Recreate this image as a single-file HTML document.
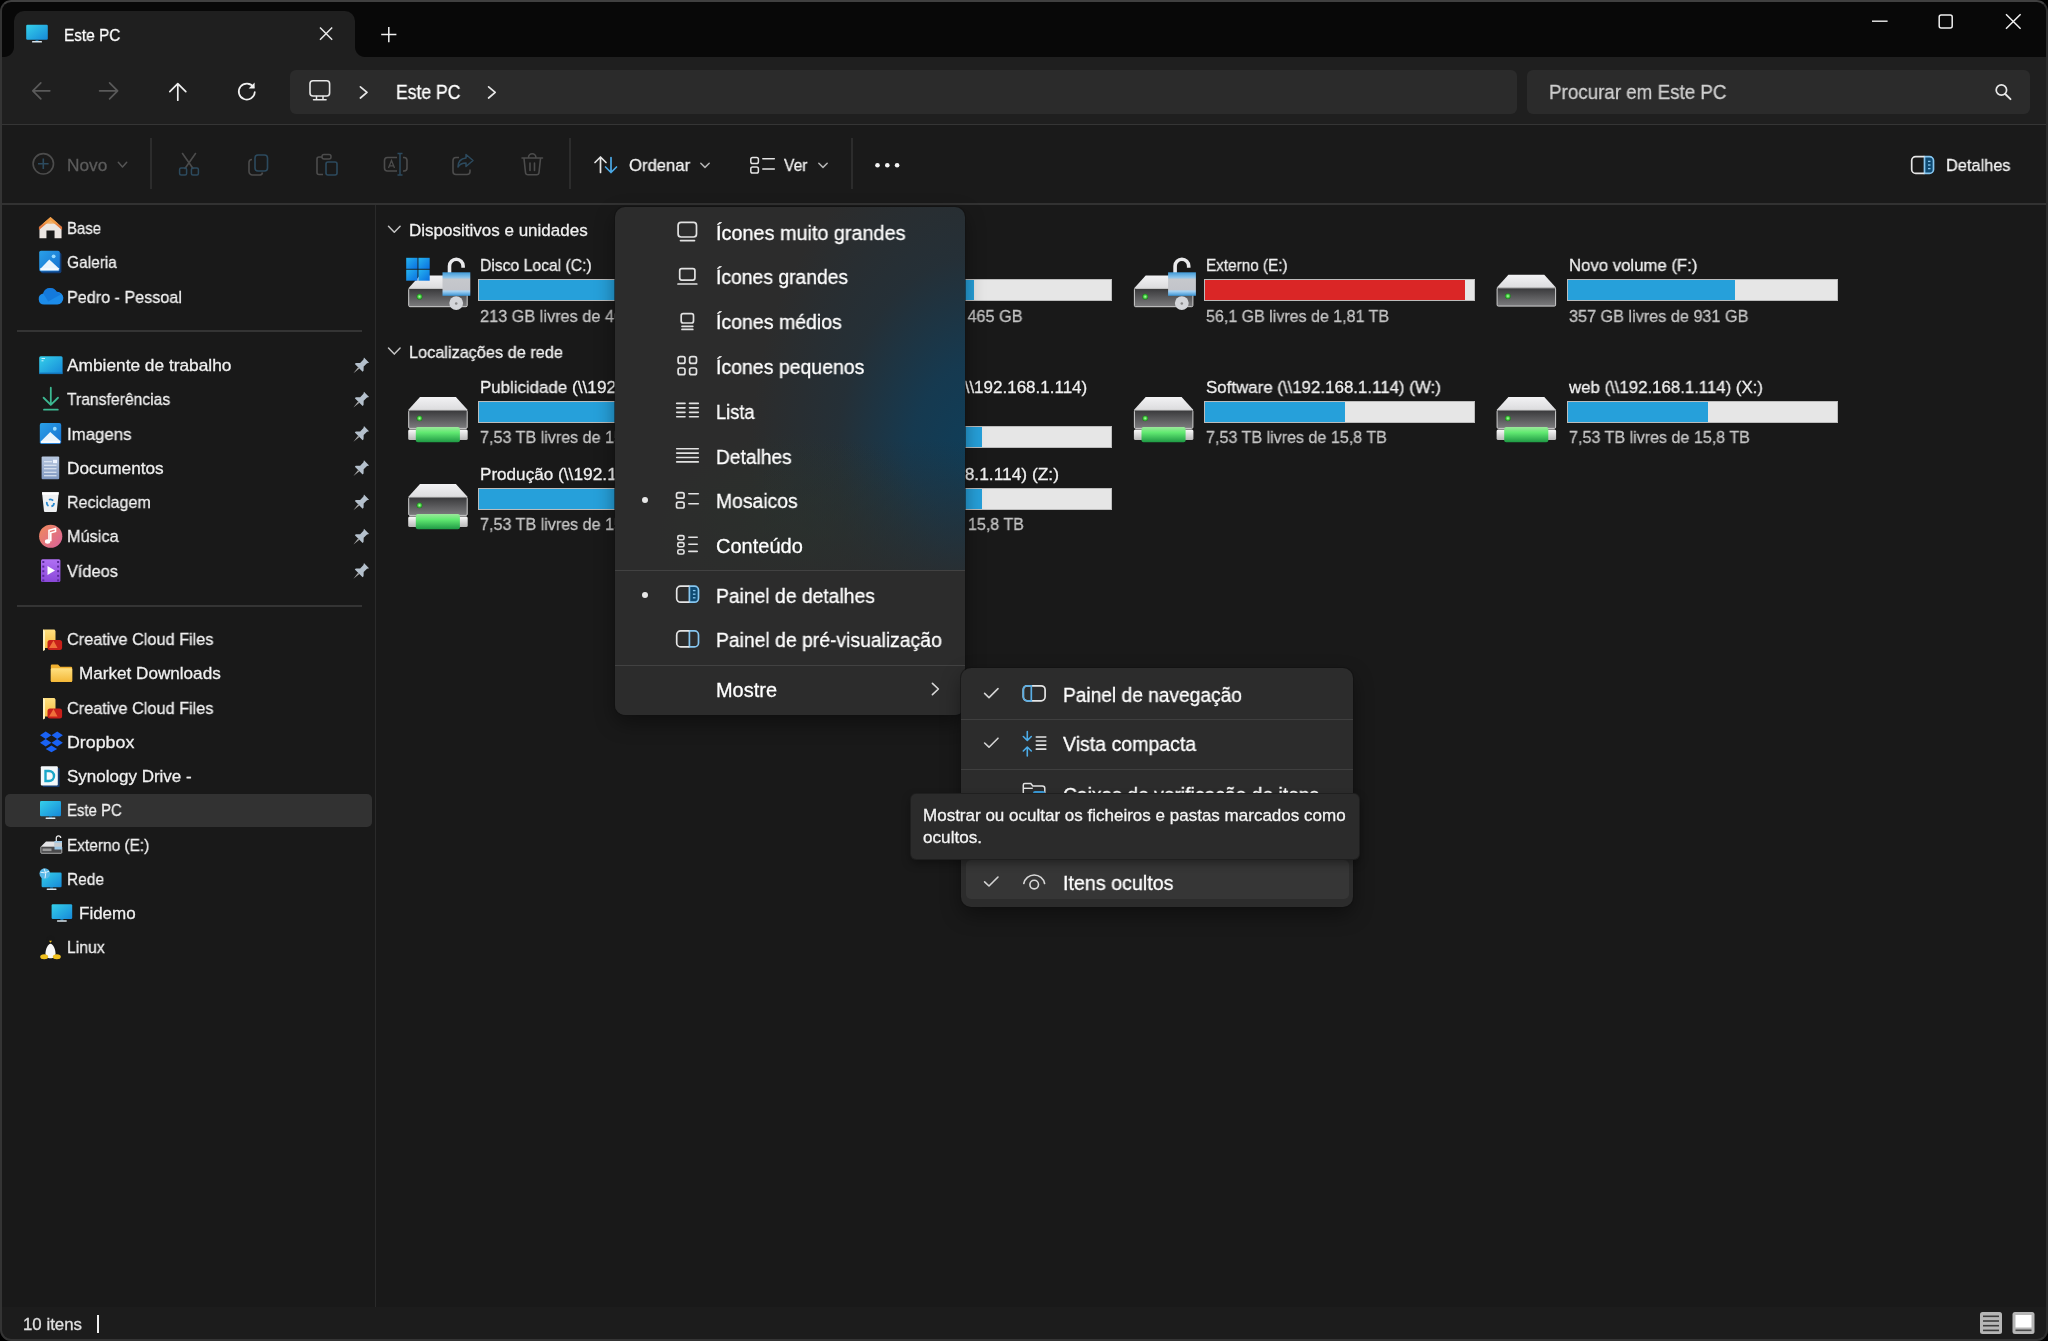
<!DOCTYPE html>
<html><head><meta charset="utf-8"><title>Este PC</title>
<style>
html,body{margin:0;padding:0;background:#000;}
body{width:2048px;height:1341px;position:relative;overflow:hidden;font-family:"Liberation Sans", sans-serif;}
#win{position:absolute;left:0;top:0;width:2048px;height:1341px;border-radius:11px;overflow:hidden;background:#191919;}
#win>div,#win>svg,#win>span{position:absolute;}
.t{white-space:nowrap;line-height:1;transform-origin:0 0;display:block;-webkit-text-stroke:.28px currentColor;will-change:transform;}
svg{overflow:visible;}
</style></head><body><div id="win">
<div style="left:0px;top:0px;width:2048px;height:57px;background:#080808;"></div>
<div style="left:0px;top:57px;width:2048px;height:68px;background:#1f1f1f;"></div>
<div style="left:14px;top:11px;width:341px;height:47px;background:#1f1f1f;border-radius:10px 10px 0 0;"></div>
<div style="left:4px;top:47px;width:10px;height:10px;background:radial-gradient(circle at 0 0,#080808 9.5px,#1f1f1f 10.5px)"></div>
<div style="left:355px;top:47px;width:10px;height:10px;background:radial-gradient(circle at 100% 0,#080808 9.5px,#1f1f1f 10.5px)"></div>
<div style="left:0px;top:123.8px;width:2048px;height:2px;background:#353535;"></div>
<div style="left:0px;top:125px;width:2048px;height:79px;background:#1a1a1a;"></div>
<div style="left:0px;top:202.9px;width:2048px;height:2px;background:#323232;"></div>
<div style="left:375px;top:205px;width:1px;height:1102px;background:#2a2a2a;"></div>
<div style="left:0px;top:1307px;width:2048px;height:34px;background:#1c1c1c;"></div>
<div style="left:290px;top:70px;width:1227px;height:44px;background:#2b2b2b;border-radius:6px;"></div>
<div style="left:1527px;top:70px;width:503px;height:44px;background:#2b2b2b;border-radius:6px;"></div>
<div style="left:5px;top:794px;width:367px;height:33px;background:#323232;border-radius:5px;"></div>
<div style="left:17px;top:330px;width:345px;height:1.5px;background:#343434;"></div>
<div style="left:17px;top:605px;width:345px;height:1.5px;background:#343434;"></div>
<div style="left:150.2px;top:138px;width:2px;height:51px;background:#2c2c2c;"></div>
<div style="left:569.4px;top:138px;width:2px;height:51px;background:#2c2c2c;"></div>
<div style="left:851.2px;top:138px;width:2px;height:51px;background:#2c2c2c;"></div>
<span class="t" id="t0" style="left:63.6px;top:27.0px;font-size:17.0px;color:#fff;transform:scaleX(0.9044);">Este PC</span>
<span class="t" id="t1" style="left:396.0px;top:83.0px;font-size:19.9px;color:#fff;transform:scaleX(0.8839);">Este PC</span>
<span class="t" id="t2" style="left:1549.0px;top:83.0px;font-size:19.9px;color:#cfcfcf;transform:scaleX(0.9445);">Procurar em Este PC</span>
<span class="t" id="t3" style="left:66.9px;top:157.0px;font-size:17.0px;color:#5c5c5c;transform:scaleX(1.0154);">Novo</span>
<span class="t" id="t4" style="left:628.5px;top:157.0px;font-size:17.0px;color:#f2f2f2;transform:scaleX(0.9796);">Ordenar</span>
<span class="t" id="t5" style="left:784.0px;top:157.0px;font-size:17.0px;color:#f2f2f2;transform:scaleX(0.9204);">Ver</span>
<span class="t" id="t6" style="left:1945.5px;top:157.0px;font-size:17.0px;color:#f2f2f2;transform:scaleX(0.9611);">Detalhes</span>
<span class="t" id="t7" style="left:66.8px;top:220.0px;font-size:17.0px;color:#f0f0f0;transform:scaleX(0.8800);">Base</span>
<span class="t" id="t8" style="left:66.8px;top:254.0px;font-size:17.0px;color:#f0f0f0;transform:scaleX(0.9104);">Galeria</span>
<span class="t" id="t9" style="left:66.8px;top:289.0px;font-size:17.0px;color:#f0f0f0;transform:scaleX(0.9500);">Pedro - Pessoal</span>
<span class="t" id="t10" style="left:66.8px;top:357.0px;font-size:17.0px;color:#f0f0f0;transform:scaleX(1.0173);">Ambiente de trabalho</span>
<span class="t" id="t11" style="left:66.8px;top:391.0px;font-size:17.0px;color:#f0f0f0;transform:scaleX(0.9239);">Transferências</span>
<span class="t" id="t12" style="left:66.8px;top:426.0px;font-size:17.0px;color:#f0f0f0;transform:scaleX(0.9892);">Imagens</span>
<span class="t" id="t13" style="left:66.8px;top:460.0px;font-size:17.0px;color:#f0f0f0;transform:scaleX(1.0132);">Documentos</span>
<span class="t" id="t14" style="left:66.8px;top:494.0px;font-size:17.0px;color:#f0f0f0;transform:scaleX(0.9424);">Reciclagem</span>
<span class="t" id="t15" style="left:66.8px;top:528.0px;font-size:17.0px;color:#f0f0f0;transform:scaleX(0.9581);">Música</span>
<span class="t" id="t16" style="left:66.8px;top:563.0px;font-size:17.0px;color:#f0f0f0;transform:scaleX(0.9615);">Vídeos</span>
<span class="t" id="t17" style="left:66.8px;top:631.0px;font-size:17.0px;color:#f0f0f0;transform:scaleX(0.9571);">Creative Cloud Files</span>
<span class="t" id="t18" style="left:78.7px;top:665.0px;font-size:17.0px;color:#f0f0f0;transform:scaleX(1.0065);">Market Downloads</span>
<span class="t" id="t19" style="left:66.8px;top:700.0px;font-size:17.0px;color:#f0f0f0;transform:scaleX(0.9571);">Creative Cloud Files</span>
<span class="t" id="t20" style="left:66.8px;top:734.0px;font-size:17.0px;color:#f0f0f0;transform:scaleX(1.0472);">Dropbox</span>
<span class="t" id="t21" style="left:66.8px;top:768.0px;font-size:17.0px;color:#f0f0f0;transform:scaleX(0.9998);">Synology Drive -</span>
<span class="t" id="t22" style="left:66.8px;top:802.0px;font-size:17.0px;color:#f0f0f0;transform:scaleX(0.8788);">Este PC</span>
<span class="t" id="t23" style="left:66.8px;top:837.0px;font-size:17.0px;color:#f0f0f0;transform:scaleX(0.9074);">Externo (E:)</span>
<span class="t" id="t24" style="left:66.8px;top:871.0px;font-size:17.0px;color:#f0f0f0;transform:scaleX(0.9104);">Rede</span>
<span class="t" id="t25" style="left:78.9px;top:905.0px;font-size:17.0px;color:#f0f0f0;transform:scaleX(0.9914);">Fidemo</span>
<span class="t" id="t26" style="left:66.8px;top:939.0px;font-size:17.0px;color:#f0f0f0;transform:scaleX(0.9252);">Linux</span>
<span class="t" id="t27" style="left:408.9px;top:222.0px;font-size:17.0px;color:#f0f0f0;transform:scaleX(1.0005);">Dispositivos e unidades</span>
<span class="t" id="t28" style="left:408.9px;top:344.0px;font-size:17.0px;color:#f0f0f0;transform:scaleX(0.9579);">Localizações de rede</span>
<div style="left:477.5px;top:279px;width:271px;height:22px;background:#e6e6e6;box-shadow:inset 0 0 0 1px #bcbcbc;"></div>
<div style="left:478.5px;top:280px;width:145px;height:20px;background:#26a0da;"></div>
<div style="left:840.5px;top:279px;width:271px;height:22px;background:#e6e6e6;box-shadow:inset 0 0 0 1px #bcbcbc;"></div>
<div style="left:841.5px;top:280px;width:132px;height:20px;background:#26a0da;"></div>
<div style="left:1203.5px;top:279px;width:271px;height:22px;background:#e6e6e6;box-shadow:inset 0 0 0 1px #bcbcbc;"></div>
<div style="left:1204.5px;top:280px;width:260px;height:20px;background:#da2626;"></div>
<div style="left:1566.5px;top:279px;width:271px;height:22px;background:#e6e6e6;box-shadow:inset 0 0 0 1px #bcbcbc;"></div>
<div style="left:1567.5px;top:280px;width:167px;height:20px;background:#26a0da;"></div>
<span class="t" id="t29" style="left:480.3px;top:257.0px;font-size:17.0px;color:#f0f0f0;transform:scaleX(0.9237);">Disco Local (C:)</span>
<span class="t" id="t30" style="left:480.3px;top:308.0px;font-size:17.0px;color:#c4c4c4;transform:scaleX(0.9583);">213 GB livres de 465 GB</span>
<span class="t" id="t31" style="left:843.3px;top:257.0px;font-size:17.0px;color:#f0f0f0;transform:scaleX(0.9332);">Dados (D:)</span>
<span class="t" id="t32" style="left:843.3px;top:308.0px;font-size:17.0px;color:#c4c4c4;transform:scaleX(0.9545);">237 GB livres de 465 GB</span>
<span class="t" id="t33" style="left:1206.3px;top:257.0px;font-size:17.0px;color:#f0f0f0;transform:scaleX(0.8996);">Externo (E:)</span>
<span class="t" id="t34" style="left:1206.3px;top:308.0px;font-size:17.0px;color:#c4c4c4;transform:scaleX(0.9421);">56,1 GB livres de 1,81 TB</span>
<span class="t" id="t35" style="left:1568.7px;top:257.0px;font-size:17.0px;color:#f0f0f0;transform:scaleX(0.9849);">Novo volume (F:)</span>
<span class="t" id="t36" style="left:1568.7px;top:308.0px;font-size:17.0px;color:#c4c4c4;transform:scaleX(0.9540);">357 GB livres de 931 GB</span>
<div style="left:477.5px;top:401px;width:271px;height:22px;background:#e6e6e6;box-shadow:inset 0 0 0 1px #bcbcbc;"></div>
<div style="left:478.5px;top:402px;width:140px;height:20px;background:#26a0da;"></div>
<div style="left:840.5px;top:425.5px;width:271px;height:22px;background:#e6e6e6;box-shadow:inset 0 0 0 1px #bcbcbc;"></div>
<div style="left:841.5px;top:426.5px;width:140px;height:20px;background:#26a0da;"></div>
<div style="left:1203.5px;top:401px;width:271px;height:22px;background:#e6e6e6;box-shadow:inset 0 0 0 1px #bcbcbc;"></div>
<div style="left:1204.5px;top:402px;width:140px;height:20px;background:#26a0da;"></div>
<div style="left:1566.5px;top:401px;width:271px;height:22px;background:#e6e6e6;box-shadow:inset 0 0 0 1px #bcbcbc;"></div>
<div style="left:1567.5px;top:402px;width:140px;height:20px;background:#26a0da;"></div>
<span class="t" id="t37" style="left:480.3px;top:379.0px;font-size:17.0px;color:#f0f0f0;transform:scaleX(0.9920);">Publicidade</span>
<span class="t" id="t38" style="left:571.7px;top:379.0px;font-size:17.0px;color:#f0f0f0;transform:scaleX(1.0166);">(\\192.168.1.114) (P:)</span>
<span class="t" id="t39" style="left:480.3px;top:429.0px;font-size:17.0px;color:#c4c4c4;transform:scaleX(0.9477);">7,53 TB livres de 15,8 TB</span>
<span class="t" id="t40" style="left:843.3px;top:379.0px;font-size:17.0px;color:#f0f0f0;transform:scaleX(1.4592);">Fotografia</span>
<span class="t" id="t41" style="left:959.2px;top:379.0px;font-size:17.0px;color:#f0f0f0;transform:scaleX(0.9982);">(\\192.168.1.114)</span>
<span class="t" id="t42" style="left:843.3px;top:403.0px;font-size:17.0px;color:#f0f0f0;transform:scaleX(0.9337);">(Y:)</span>
<span class="t" id="t43" style="left:1205.7px;top:379.0px;font-size:17.0px;color:#f0f0f0;transform:scaleX(0.9926);">Software (\\192.168.1.114) (W:)</span>
<span class="t" id="t44" style="left:1206.3px;top:429.0px;font-size:17.0px;color:#c4c4c4;transform:scaleX(0.9461);">7,53 TB livres de 15,8 TB</span>
<span class="t" id="t45" style="left:1568.7px;top:379.0px;font-size:17.0px;color:#f0f0f0;transform:scaleX(0.9885);">web (\\192.168.1.114) (X:)</span>
<span class="t" id="t46" style="left:1568.7px;top:429.0px;font-size:17.0px;color:#c4c4c4;transform:scaleX(0.9461);">7,53 TB livres de 15,8 TB</span>
<div style="left:477.5px;top:488px;width:271px;height:22px;background:#e6e6e6;box-shadow:inset 0 0 0 1px #bcbcbc;"></div>
<div style="left:478.5px;top:489px;width:140px;height:20px;background:#26a0da;"></div>
<div style="left:840.5px;top:488px;width:271px;height:22px;background:#e6e6e6;box-shadow:inset 0 0 0 1px #bcbcbc;"></div>
<div style="left:841.5px;top:489px;width:140px;height:20px;background:#26a0da;"></div>
<span class="t" id="t47" style="left:480.3px;top:466.0px;font-size:17.0px;color:#f0f0f0;transform:scaleX(1.0058);">Produção</span>
<span class="t" id="t48" style="left:557.7px;top:466.0px;font-size:17.0px;color:#f0f0f0;transform:scaleX(1.0206);">(\\192.168.1.114) (V:)</span>
<span class="t" id="t49" style="left:480.3px;top:516.0px;font-size:17.0px;color:#c4c4c4;transform:scaleX(0.9477);">7,53 TB livres de 15,8 TB</span>
<span class="t" id="t50" style="left:843.3px;top:466.0px;font-size:17.0px;color:#f0f0f0;transform:scaleX(0.8275);">Arquivo</span>
<span class="t" id="t51" style="left:895.6px;top:466.0px;font-size:17.0px;color:#f0f0f0;transform:scaleX(1.0227);">(\\192.168.1.114) (Z:)</span>
<span class="t" id="t52" style="left:843.3px;top:516.0px;font-size:17.0px;color:#c4c4c4;transform:scaleX(0.9466);">7,53 TB livres de 15,8 TB</span>
<span class="t" id="t53" style="left:23.0px;top:1316.0px;font-size:16.5px;color:#e0e0e0;transform:scaleX(1.0208);">10 itens</span>
<div style="left:97px;top:1315px;width:2px;height:18px;background:#f0f0f0;"></div>
<svg style="left:0;top:0;width:0;height:0;" width="2048" height="1341" viewBox="0 0 2048 1341"><defs>
<linearGradient id="gMon" x1="0" y1="0" x2="1" y2="1"><stop offset="0" stop-color="#35d0ea"/><stop offset="1" stop-color="#1688d8"/></linearGradient>
<linearGradient id="gFront" x1="0" y1="0" x2="0" y2="1"><stop offset="0" stop-color="#38383a"/><stop offset="1" stop-color="#7c7c7e"/></linearGradient>
<linearGradient id="gTop" x1="0" y1="0" x2="0" y2="1"><stop offset="0" stop-color="#f2f2f4"/><stop offset="1" stop-color="#dcdcde"/></linearGradient>
<linearGradient id="gGreen" x1="0" y1="0" x2="0" y2="1"><stop offset="0" stop-color="#9be89b"/><stop offset=".35" stop-color="#62ea72"/><stop offset="1" stop-color="#1f9a45"/></linearGradient>
<linearGradient id="gPipe" x1="0" y1="0" x2="0" y2="1"><stop offset="0" stop-color="#fafafa"/><stop offset="1" stop-color="#b8b8b8"/></linearGradient>
<linearGradient id="gLock" x1="0" y1="0" x2="0" y2="1"><stop offset="0" stop-color="#3f9ad8"/><stop offset=".22" stop-color="#8cc4ea"/><stop offset=".3" stop-color="#c6c8cc"/><stop offset=".74" stop-color="#c2c4ca"/><stop offset=".8" stop-color="#a8d4f4"/><stop offset="1" stop-color="#3a94d4"/></linearGradient>
<radialGradient id="gLed"><stop offset="0" stop-color="#b8ffb0"/><stop offset=".5" stop-color="#4fd84a"/><stop offset="1" stop-color="#1c7a1c"/></radialGradient>
<linearGradient id="gWin" x1="0" y1="0" x2="1" y2="1"><stop offset="0" stop-color="#25b4f0"/><stop offset="1" stop-color="#0a6fe0"/></linearGradient>
<linearGradient id="gHome" x1="0" y1="0" x2="0" y2="1"><stop offset="0" stop-color="#f4a04a"/><stop offset="1" stop-color="#d86a38"/></linearGradient>
<linearGradient id="gMusic" x1="0" y1="0" x2="1" y2="1"><stop offset="0" stop-color="#f08a5a"/><stop offset="1" stop-color="#d8629c"/></linearGradient>
<linearGradient id="gVid" x1="0" y1="0" x2="0" y2="1"><stop offset="0" stop-color="#b070f4"/><stop offset="1" stop-color="#8a48d8"/></linearGradient>
<linearGradient id="gDoc" x1="0" y1="0" x2="0" y2="1"><stop offset="0" stop-color="#b8c8e0"/><stop offset="1" stop-color="#8098c0"/></linearGradient>
<linearGradient id="gFold" x1="0" y1="0" x2="0" y2="1"><stop offset="0" stop-color="#ffe080"/><stop offset="1" stop-color="#f4b838"/></linearGradient>
<linearGradient id="gPic" x1="0" y1="0" x2="1" y2="1"><stop offset="0" stop-color="#2aa0e8"/><stop offset="1" stop-color="#1570d0"/></linearGradient>
</defs></svg>
<svg style="left:0;top:0;" width="2048" height="1341" viewBox="0 0 2048 1341"><rect x="26.2" y="24.8" width="21.6" height="15" rx="1.2" fill="url(#gMon)"/><rect x="35.5" y="39.8" width="3" height="1.6" fill="#1a6a9a"/><rect x="32.0" y="41.099999999999994" width="10" height="1.5" rx=".7" fill="#d8e4ec"/><path d="M320 27.5l12.2 12.2M332.2 27.5L320 39.7" stroke="#e8e8e8" stroke-width="1.5" fill="none"/><path d="M381.2 34.6h15.2M388.8 27v15.2" stroke="#f0f0f0" stroke-width="1.5" fill="none"/><path d="M1872 21.2h15.6" stroke="#f0f0f0" stroke-width="1.4"/><rect x="1939.2" y="15" width="13" height="13" rx="2" stroke="#f0f0f0" stroke-width="1.5" fill="none"/><path d="M2006 14.2l14.6 14.6M2020.6 14.2L2006 28.8" stroke="#f0f0f0" stroke-width="1.5" fill="none"/><path d="M49.8 90.8H33M40.8 82.8l-8 8 8 8" stroke="#5a5a5a" stroke-width="1.7" fill="none" stroke-linecap="round" stroke-linejoin="round"/><path d="M99.6 90.8h17.6M109.6 82.8l8 8-8 8" stroke="#5a5a5a" stroke-width="1.7" fill="none" stroke-linecap="round" stroke-linejoin="round"/><path d="M177.8 100.2V83.6M169.8 91.6l8-8 8 8" stroke="#f0f0f0" stroke-width="1.7" fill="none" stroke-linecap="round" stroke-linejoin="round"/><path d="M253.5 87.2A8 8 0 1 0 254.8 92" stroke="#f0f0f0" stroke-width="1.7" fill="none" stroke-linecap="round"/><path d="M254.6 82.4v6h-6z" fill="#f0f0f0"/><rect x="310" y="80.8" width="19.6" height="15.2" rx="3" stroke="#e6e6e6" stroke-width="1.6" fill="none"/><path d="M316.5 96.5v3M323 96.5v3M313.5 99.8h12.6" stroke="#e6e6e6" stroke-width="1.5" fill="none" stroke-linecap="round"/><path d="M360.4 86.80000000000001l6.6 5.6-6.6 5.6" stroke="#e8e8e8" stroke-width="1.7" fill="none" stroke-linecap="round" stroke-linejoin="round"/><path d="M488.59999999999997 86.80000000000001l6.6 5.6-6.6 5.6" stroke="#e8e8e8" stroke-width="1.7" fill="none" stroke-linecap="round" stroke-linejoin="round"/><circle cx="2001.4" cy="90" r="5.2" stroke="#e8e8e8" stroke-width="1.7" fill="none"/><path d="M2005.3 94l5.2 5.2" stroke="#e8e8e8" stroke-width="1.9" stroke-linecap="round"/></svg>
<svg style="left:0;top:0;" width="2048" height="1341" viewBox="0 0 2048 1341"><circle cx="43.3" cy="163.8" r="10.2" stroke="#4c4c4c" stroke-width="1.6" fill="none"/><path d="M38 163.8h10.6M43.3 158.5v10.6" stroke="#2c4a5e" stroke-width="1.6"/><path d="M118.3 162.29999999999998l4.2 4.6 4.2-4.6" stroke="#555" stroke-width="1.5" fill="none" stroke-linecap="round" stroke-linejoin="round"/><path d="M182.5 153.5l10.5 15M195.5 153.5l-10.5 15" stroke="#4c4c4c" stroke-width="1.6" fill="none" stroke-linecap="round"/><rect x="179.6" y="168" width="7" height="7" rx="1.5" stroke="#2c4a5e" stroke-width="1.5" fill="none"/><rect x="191.4" y="168" width="7" height="7" rx="1.5" stroke="#2c4a5e" stroke-width="1.5" fill="none"/><rect x="255" y="155" width="12.5" height="16" rx="3" stroke="#2c4a5e" stroke-width="1.6" fill="none"/><path d="M252 159.5a3 3 0 0 0-3 3v9a3.5 3.5 0 0 0 3.5 3.5h7a3 3 0 0 0 3-2.5" stroke="#4c4c4c" stroke-width="1.6" fill="none"/><path d="M322 157h-3a2 2 0 0 0-2 2v13.5a2 2 0 0 0 2 2h4" stroke="#4c4c4c" stroke-width="1.6" fill="none"/><rect x="322" y="154.5" width="9" height="4.5" rx="2" stroke="#4c4c4c" stroke-width="1.5" fill="none"/><rect x="326" y="162" width="11" height="13" rx="2" stroke="#2c4a5e" stroke-width="1.6" fill="none"/><path d="M397 157.500h-9.500a3 3 0 0 0-3 3v7.500a3 3 0 0 0 3 3h9.500M403 157.500h1a3 3 0 0 1 3 3v7.500a3 3 0 0 1-3 3h-1" stroke="#4c4c4c" stroke-width="1.600" fill="none"/><path d="M400 153.500v21.500M397.500 153.500h5M397.500 175h5" stroke="#2c4a5e" stroke-width="1.500" fill="none"/><path d="M388.500 168l3-7.500 3 7.500M389.500 165.800h4" stroke="#4c4c4c" stroke-width="1.300" fill="none"/><path d="M459 157.500h-3a3 3 0 0 0-3 3v11a3 3 0 0 0 3 3h11a3 3 0 0 0 3-3v-2" stroke="#4c4c4c" stroke-width="1.6" fill="none"/><path d="M466 154.500l7 6-7 6v-3.500c-4 0-6.500 1.500-8 4 0-5 3-8.500 8-9z" stroke="#2c4a5e" stroke-width="1.500" fill="none" stroke-linejoin="round"/><path d="M522 158h20.500M528.500 157.500a3.700 3.700 0 0 1 7.400 0M524 158.500l1.500 14a2.500 2.500 0 0 0 2.500 2.300h8.500a2.500 2.500 0 0 0 2.500-2.300l1.500-14M530 163v7.500M534.500 163v7.500" stroke="#4c4c4c" stroke-width="1.600" fill="none" stroke-linecap="round"/><path d="M600.500 172.500v-15M595 162.500l5.500-5.500 5.500 5.500" stroke="#e4e4e4" stroke-width="1.700" fill="none" stroke-linecap="round" stroke-linejoin="round"/><path d="M611 157.500v15M605.500 167l5.500 5.500 5.500-5.500" stroke="#4aa8e6" stroke-width="1.700" fill="none" stroke-linecap="round" stroke-linejoin="round"/><path d="M700.8 163.20000000000002l4.2 4.2 4.2-4.2" stroke="#b4b4b4" stroke-width="1.5" fill="none" stroke-linecap="round" stroke-linejoin="round"/><rect x="750.8" y="157.5" width="7.600" height="6" rx="1.800" stroke="#e4e4e4" stroke-width="1.500" fill="none"/><rect x="750.8" y="167.1" width="7.600" height="6" rx="1.800" stroke="#e4e4e4" stroke-width="1.500" fill="none"/><path d="M762.8 158.8h11.500M762.8 169.0h11.500" stroke="#e4e4e4" stroke-width="1.500" stroke-linecap="round"/><path d="M818.8 163.20000000000002l4.2 4.2 4.2-4.2" stroke="#b4b4b4" stroke-width="1.5" fill="none" stroke-linecap="round" stroke-linejoin="round"/><circle cx="877.500" cy="165.300" r="2.300" fill="#f4f4f4"/><circle cx="887.300" cy="165.300" r="2.300" fill="#f4f4f4"/><circle cx="897.100" cy="165.300" r="2.300" fill="#f4f4f4"/><path d="M1924.5 156.6H1929.5a4 4 0 0 1 4 4V169.4a4 4 0 0 1-4 4H1924.5z" stroke="#86c6f0" stroke-width="1.700" fill="#0f4a72"/><path d="M1924.5 156.6H1915.7a4 4 0 0 0-4 4V169.4a4 4 0 0 0 4 4H1924.5" stroke="#e6e6e6" stroke-width="1.700" fill="none"/><path d="M1928.0 161.4h2.5" stroke="#86c6f0" stroke-width="1.300"/><path d="M1928.0 165.0h2.5" stroke="#86c6f0" stroke-width="1.300"/><path d="M1928.0 168.6h2.5" stroke="#86c6f0" stroke-width="1.300"/></svg>
<svg style="left:0;top:0;" width="2048" height="1341" viewBox="0 0 2048 1341"><g transform="translate(50.500 228.0) scale(.92) translate(-50.500 -228.0)"><path d="M50.500 216.5l12 10.500v12.200h-7.600v-8.400h-8.800v8.400h-7.600v-12.200z" fill="#ebe6e2"/><path d="M50.500 216.0l12.600 11v3.200l-12.600-10.600-12.600 10.600v-3.200z" fill="url(#gHome)"/><path d="M50.500 216.0l8 7-8 .500-8-.500z" fill="#f2a048" opacity=".8"/></g><rect x="40.800000000000004" y="252.55" width="20.6" height="20.8" rx="2" fill="#123e78"/><rect x="39.2" y="250.75" width="20.6" height="20.8" rx="1.800" fill="url(#gPic)"/><path d="M40.2 269.05l9.064 -9.568000000000001 10.3 9.568000000000001z" fill="#eaf4fc"/><rect x="40.2" y="268.35" width="18.6" height="2.200" fill="#f6fbff"/><circle cx="53.620000000000005" cy="256.366" r="1.900" fill="#9adcff"/><g transform="translate(38.400 288.5)"><path d="M5.600 16a5.500 5.500 0 0 1-.800-10.900a7.300 7.300 0 0 1 13.500-1.800a6.200 6.200 0 0 1 .600 12.700z" fill="#1c8cea"/><path d="M4.800 5.100a7.300 7.300 0 0 1 13.500-1.800a6.200 6.200 0 0 1 4 2.600l-12.500 7z" fill="#0f6cd0" opacity=".55"/></g><rect x="39.200" y="356.2" width="23.400" height="17.800" rx="1.500" fill="url(#gMon)"/><rect x="39.200" y="372.6" width="23.400" height="1.500" fill="#1474b8"/><path d="M41.500 358.5h3.500M41.500 360.8h2" stroke="#c8f4ff" stroke-width="1"/><path d="M50.800 387.75v17M43.600 397.75l7.200 7.200 7.200-7.200M44 409.65h13.800" stroke="#3cb892" stroke-width="1.800" fill="none" stroke-linecap="round" stroke-linejoin="round"/><rect x="39.8" y="423.1" width="21.4" height="21" rx="1.800" fill="url(#gPic)"/><path d="M40.8 441.6l9.415999999999999 -9.66 10.7 9.66z" fill="#eaf4fc"/><rect x="40.8" y="440.90000000000003" width="19.4" height="2.200" fill="#f6fbff"/><circle cx="54.779999999999994" cy="428.77000000000004" r="1.900" fill="#9adcff"/><rect x="41.600" y="456.45" width="17.600" height="22.800" rx="1" fill="url(#gDoc)"/><path d="M44 461.75h8M44 465.25h12.500M44 468.75h12.500M44 472.25h12.500M44 475.75h12.500" stroke="#e8eef8" stroke-width="1.100"/><rect x="53" y="459.75" width="4" height="3.400" fill="#eef4ff"/><path d="M42 492.2h16.800l-2 19a1 1 0 0 1-1 .800h-10.800a1 1 0 0 1-1-.800z" fill="#eef0f2"/><path d="M42 492.2h16.800l-.300 2.500h-16.200z" fill="#fff"/><circle cx="50.400" cy="503.0" r="3.600" stroke="#2a8ad0" stroke-width="1.800" fill="none" stroke-dasharray="4.500 3"/><circle cx="50.700" cy="536.25" r="11.600" fill="url(#gMusic)"/><path d="M49 541.25v-11l6.500-1.800v3l-4.700 1.300v8.500" stroke="#fff" stroke-width="1.600" fill="none"/><ellipse cx="47.600" cy="541.45" rx="2.700" ry="2.200" fill="#fff"/><rect x="41" y="559.2" width="19.400" height="22.800" rx="1.500" fill="url(#gVid)"/><rect x="42.300" y="561.0" width="2" height="2" fill="#5a2a9a"/><rect x="57.100" y="561.0" width="2" height="2" fill="#5a2a9a"/><rect x="42.300" y="565.6" width="2" height="2" fill="#5a2a9a"/><rect x="57.100" y="565.6" width="2" height="2" fill="#5a2a9a"/><rect x="42.300" y="570.2" width="2" height="2" fill="#5a2a9a"/><rect x="57.100" y="570.2" width="2" height="2" fill="#5a2a9a"/><rect x="42.300" y="574.8" width="2" height="2" fill="#5a2a9a"/><rect x="57.100" y="574.8" width="2" height="2" fill="#5a2a9a"/><rect x="42.300" y="579.4" width="2" height="2" fill="#5a2a9a"/><rect x="57.100" y="579.4" width="2" height="2" fill="#5a2a9a"/><path d="M47.500 566.0l7.500 4.500-7.500 4.500z" fill="#fff"/><path d="M43 629.5h11.500l1 1.500v17h-11l-1.500 2z" fill="url(#gFold)"/><path d="M43 629.5l2 1.500v19l-2 1z" fill="#fff2c0"/><rect x="47.500" y="640.0" width="14.600" height="10" rx="2.500" fill="#c8201a"/><path d="M49 648.0l4.500-7.500 4 7.500z" fill="#f0703a"/><path d="M43 698.0h11.500l1 1.500v17h-11l-1.500 2z" fill="url(#gFold)"/><path d="M43 698.0l2 1.500v19l-2 1z" fill="#fff2c0"/><rect x="47.500" y="708.5" width="14.600" height="10" rx="2.500" fill="#c8201a"/><path d="M49 716.5l4.500-7.500 4 7.500z" fill="#f0703a"/><path d="M50.8 665.75a1.200 1.200 0 0 1 1.200-1.200h6l2.200 2.200h10.800a1.200 1.200 0 0 1 1.200 1.200v12.800a1.200 1.200 0 0 1-1.200 1.200h-19a1.200 1.200 0 0 1-1.200-1.200z" fill="#f0b030"/><rect x="50.8" y="668.25" width="21.400" height="13.700" rx="1.200" fill="url(#gFold)"/><path d="M45.7 731.55l5.7 3.7-5.7 3.7-5.7-3.7z" fill="#1a62f4"/><path d="M57.2 731.55l5.7 3.7-5.7 3.7-5.7-3.7z" fill="#1a62f4"/><path d="M45.7 739.05l5.7 3.7-5.7 3.7-5.7-3.7z" fill="#1a62f4"/><path d="M57.2 739.05l5.7 3.7-5.7 3.7-5.7-3.7z" fill="#1a62f4"/><path d="M51.45 745.5500000000001l5.7 3.4-5.7 3.4-5.7-3.4z" fill="#1a62f4"/><rect x="42.600" y="768.0" width="17" height="19" rx="1" fill="#163a6c"/><rect x="40.800" y="766.2" width="17" height="19.400" rx="1" fill="#f4f8fa"/><path d="M45.500 771.0h3.500a5 5 0 0 1 0 10h-3.500z" stroke="#1aa6c8" stroke-width="2.400" fill="none"/><rect x="40" y="800.95" width="21" height="15.3" rx="1.2" fill="url(#gMon)"/><rect x="49.0" y="816.25" width="3" height="1.6" fill="#1a6a9a"/><rect x="45.5" y="817.55" width="10" height="1.5" rx=".7" fill="#d8e4ec"/><path d="M46 841.5h14l2 5h-21z" fill="#e4e4e6"/><rect x="40.800" y="846.5" width="21" height="6.800" rx=".800" fill="#4a4a4c" stroke="#c8c8c8" stroke-width=".800"/><rect x="42.500" y="848.5" width="9" height="2.600" fill="#9a9a9a"/><rect x="54.500" y="841.0" width="7.500" height="8.500" fill="#9cc8e8"/><rect x="54.500" y="842.7" width="7.500" height="4" fill="#c8ccd0"/><path d="M56.300 841.0v-3a2.200 2.200 0 0 1 4.400 0" stroke="#e8e8e8" stroke-width="1.300" fill="none"/><rect x="41.6" y="872.55" width="20" height="14.6" rx="1.2" fill="url(#gMon)"/><rect x="50.1" y="887.15" width="3" height="1.6" fill="#1a6a9a"/><rect x="46.6" y="888.4499999999999" width="10" height="1.5" rx=".7" fill="#d8e4ec"/><circle cx="44.800" cy="873.45" r="5.300" fill="#58b8e8"/><path d="M40.500 872.25q4 1.500 8.500-1M44 868.75q3 4 1 9.500" stroke="#dff2fc" stroke-width="1" fill="none"/><rect x="51.6" y="904.2" width="20.6" height="14.8" rx="1.2" fill="url(#gMon)"/><rect x="60.400000000000006" y="919.0" width="3" height="1.6" fill="#1a6a9a"/><rect x="56.900000000000006" y="920.3" width="10" height="1.5" rx=".7" fill="#d8e4ec"/><path d="M50.500 935.75c3.200 0 4.300 2.600 4.300 5.500 0 3.500 4.700 7.500 4.700 12 0 3-2 5-9 5s-9-2-9-5c0-4.500 4.700-8.500 4.700-12 0-2.900 1.100-5.500 4.300-5.500z" fill="#181818"/><path d="M50.500 943.75c2.500 0 5 5.500 5 9.500s-2 5-5 5-5-1-5-5 2.500-9.500 5-9.500z" fill="#f8f8f8"/><ellipse cx="44.200" cy="956.85" rx="4" ry="2.500" fill="#f0c020"/><ellipse cx="56.800" cy="956.85" rx="4" ry="2.500" fill="#f0c020"/><path d="M49 940.75h3l-1.500 2z" fill="#f0c020"/><g transform="translate(360.500 366.1) rotate(45)"><path d="M-3.600 -8.500h7.200l-1.100 1.800v4.700l3 3.200v1.300h-11v-1.300l3-3.200v-4.700z" fill="#b4c0cc"/><path d="M-.900 2.500h1.800l-.900 7.500z" fill="#a8a8a8"/></g><g transform="translate(360.500 400.35) rotate(45)"><path d="M-3.600 -8.500h7.200l-1.100 1.800v4.700l3 3.200v1.300h-11v-1.300l3-3.200v-4.700z" fill="#b4c0cc"/><path d="M-.900 2.500h1.800l-.900 7.500z" fill="#a8a8a8"/></g><g transform="translate(360.500 434.6) rotate(45)"><path d="M-3.600 -8.500h7.200l-1.100 1.800v4.700l3 3.200v1.300h-11v-1.300l3-3.200v-4.700z" fill="#b4c0cc"/><path d="M-.900 2.500h1.800l-.900 7.500z" fill="#a8a8a8"/></g><g transform="translate(360.500 468.85) rotate(45)"><path d="M-3.600 -8.500h7.200l-1.100 1.800v4.700l3 3.200v1.300h-11v-1.300l3-3.200v-4.700z" fill="#b4c0cc"/><path d="M-.900 2.500h1.800l-.900 7.500z" fill="#a8a8a8"/></g><g transform="translate(360.500 503.1) rotate(45)"><path d="M-3.600 -8.500h7.200l-1.100 1.800v4.700l3 3.200v1.300h-11v-1.300l3-3.200v-4.700z" fill="#b4c0cc"/><path d="M-.900 2.500h1.800l-.900 7.500z" fill="#a8a8a8"/></g><g transform="translate(360.500 537.35) rotate(45)"><path d="M-3.600 -8.500h7.200l-1.100 1.800v4.700l3 3.200v1.300h-11v-1.300l3-3.200v-4.700z" fill="#b4c0cc"/><path d="M-.900 2.500h1.800l-.900 7.500z" fill="#a8a8a8"/></g><g transform="translate(360.500 571.6) rotate(45)"><path d="M-3.600 -8.500h7.200l-1.100 1.800v4.700l3 3.200v1.300h-11v-1.300l3-3.200v-4.700z" fill="#b4c0cc"/><path d="M-.900 2.500h1.800l-.900 7.500z" fill="#a8a8a8"/></g></svg>
<svg style="left:0;top:0;" width="2048" height="1341" viewBox="0 0 2048 1341"><path d="M388.5 226.2l5.8 6 5.8-6" stroke="#c4c4c4" stroke-width="1.5" fill="none" stroke-linecap="round" stroke-linejoin="round"/><path d="M388.5 348.1l5.8 6 5.8-6" stroke="#c4c4c4" stroke-width="1.5" fill="none" stroke-linecap="round" stroke-linejoin="round"/><path d="M420.0 275.4h35.9l11.800 13h-59.5z" fill="url(#gTop)"/><rect x="408.7" y="288.4" width="58.5" height="18.3" rx="1.200" fill="url(#gFront)" stroke="#cfcfcf" stroke-width="1"/><circle cx="419.5" cy="296.7" r="2.900" fill="url(#gLed)"/><rect x="406.2" y="257.8" width="11.300" height="11" fill="url(#gWin)"/><rect x="406.2" y="269.7" width="11.300" height="11" fill="url(#gWin)"/><rect x="418.4" y="257.8" width="11.300" height="11" fill="url(#gWin)"/><rect x="418.4" y="269.7" width="11.300" height="11" fill="url(#gWin)"/><path d="M449.5 273.3v-7.200a6.800 6.800 0 0 1 13.600 0v1.700" stroke="#e9e9eb" stroke-width="3.600" fill="none"/><circle cx="456.2" cy="303.1" r="6.900" fill="#d4d6da"/><circle cx="456.2" cy="303.5" r="1.300" fill="#888"/><rect x="442.5" y="272.3" width="27.800" height="23.500" fill="url(#gLock)"/><path d="M783.0 275.4h35.9l11.800 13h-59.5z" fill="url(#gTop)"/><rect x="771.7" y="288.4" width="58.5" height="18.3" rx="1.200" fill="url(#gFront)" stroke="#cfcfcf" stroke-width="1"/><circle cx="782.5" cy="296.7" r="2.900" fill="url(#gLed)"/><path d="M1145.7 275.4h35.9l11.800 13h-59.5z" fill="url(#gTop)"/><rect x="1134.4" y="288.4" width="58.5" height="18.3" rx="1.200" fill="url(#gFront)" stroke="#cfcfcf" stroke-width="1"/><circle cx="1145.2" cy="296.7" r="2.900" fill="url(#gLed)"/><path d="M1175.1 273.3v-7.200a6.800 6.800 0 0 1 13.600 0v1.700" stroke="#e9e9eb" stroke-width="3.600" fill="none"/><circle cx="1181.8" cy="303.1" r="6.900" fill="#d4d6da"/><circle cx="1181.8" cy="303.5" r="1.300" fill="#888"/><rect x="1168.1" y="272.3" width="27.800" height="23.500" fill="url(#gLock)"/><path d="M1508.3999999999999 274.79999999999995h35.9l11.800 13h-59.5z" fill="url(#gTop)"/><rect x="1497.1" y="287.79999999999995" width="58.5" height="18.3" rx="1.200" fill="url(#gFront)" stroke="#cfcfcf" stroke-width="1"/><circle cx="1507.8999999999999" cy="296.09999999999997" r="2.900" fill="url(#gLed)"/><path d="M420.0 397h35.9l11.800 13h-59.5z" fill="url(#gTop)"/><rect x="408.7" y="410" width="58.5" height="18.4" rx="1.200" fill="url(#gFront)" stroke="#cfcfcf" stroke-width="1"/><circle cx="419.5" cy="418.3" r="2.900" fill="url(#gLed)"/><rect x="408.2" y="429.59999999999997" width="59.5" height="10.400" rx="1.500" fill="url(#gPipe)"/><rect x="415.8" y="426.99999999999994" width="44.1" height="15.200" rx="2" fill="url(#gGreen)"/><path d="M783.0 397h35.9l11.800 13h-59.5z" fill="url(#gTop)"/><rect x="771.7" y="410" width="58.5" height="18.4" rx="1.200" fill="url(#gFront)" stroke="#cfcfcf" stroke-width="1"/><circle cx="782.5" cy="418.3" r="2.900" fill="url(#gLed)"/><rect x="771.2" y="429.59999999999997" width="59.5" height="10.400" rx="1.500" fill="url(#gPipe)"/><rect x="778.8000000000001" y="426.99999999999994" width="44.1" height="15.200" rx="2" fill="url(#gGreen)"/><path d="M1145.7 397h35.9l11.800 13h-59.5z" fill="url(#gTop)"/><rect x="1134.4" y="410" width="58.5" height="18.4" rx="1.200" fill="url(#gFront)" stroke="#cfcfcf" stroke-width="1"/><circle cx="1145.2" cy="418.3" r="2.900" fill="url(#gLed)"/><rect x="1133.9" y="429.59999999999997" width="59.5" height="10.400" rx="1.500" fill="url(#gPipe)"/><rect x="1141.5" y="426.99999999999994" width="44.1" height="15.200" rx="2" fill="url(#gGreen)"/><path d="M1508.3999999999999 397h35.9l11.800 13h-59.5z" fill="url(#gTop)"/><rect x="1497.1" y="410" width="58.5" height="18.4" rx="1.200" fill="url(#gFront)" stroke="#cfcfcf" stroke-width="1"/><circle cx="1507.8999999999999" cy="418.3" r="2.900" fill="url(#gLed)"/><rect x="1496.6" y="429.59999999999997" width="59.5" height="10.400" rx="1.500" fill="url(#gPipe)"/><rect x="1504.1999999999998" y="426.99999999999994" width="44.1" height="15.200" rx="2" fill="url(#gGreen)"/><path d="M420.0 484h35.9l11.800 13h-59.5z" fill="url(#gTop)"/><rect x="408.7" y="497" width="58.5" height="18.4" rx="1.200" fill="url(#gFront)" stroke="#cfcfcf" stroke-width="1"/><circle cx="419.5" cy="505.3" r="2.900" fill="url(#gLed)"/><rect x="408.2" y="516.6" width="59.5" height="10.400" rx="1.500" fill="url(#gPipe)"/><rect x="415.8" y="514.0" width="44.1" height="15.200" rx="2" fill="url(#gGreen)"/><path d="M783.0 484h35.9l11.800 13h-59.5z" fill="url(#gTop)"/><rect x="771.7" y="497" width="58.5" height="18.4" rx="1.200" fill="url(#gFront)" stroke="#cfcfcf" stroke-width="1"/><circle cx="782.5" cy="505.3" r="2.900" fill="url(#gLed)"/><rect x="771.2" y="516.6" width="59.5" height="10.400" rx="1.500" fill="url(#gPipe)"/><rect x="778.8000000000001" y="514.0" width="44.1" height="15.200" rx="2" fill="url(#gGreen)"/></svg>
<svg style="left:0;top:0;" width="2048" height="1341" viewBox="0 0 2048 1341"><rect x="1980" y="1312" width="22" height="22" rx="2.500" fill="#b6b6b6"/><rect x="1983" y="1315.5" width="16" height="1.600" fill="#3c3c3c"/><rect x="1983" y="1320.2" width="16" height="1.600" fill="#3c3c3c"/><rect x="1983" y="1324.9" width="16" height="1.600" fill="#3c3c3c"/><rect x="1983" y="1329.6" width="16" height="1.600" fill="#3c3c3c"/><rect x="2012.500" y="1312" width="22" height="22" rx="2.500" fill="#b6b6b6"/><rect x="2015.500" y="1315" width="16" height="12.500" fill="#fff"/><rect x="2015.500" y="1329.500" width="16" height="1.600" fill="#4a4a4a"/></svg>
<div style="left:614.5px;top:206.5px;width:350px;height:508px;border-radius:10px;background:radial-gradient(ellipse 150px 110px at 52% 66%,rgba(40,58,44,.55) 0%,rgba(40,58,44,0) 100%),radial-gradient(ellipse 230px 330px at 104% 50%,rgba(14,62,90,1) 0%,rgba(18,60,86,.85) 30%,rgba(28,52,68,.45) 62%,rgba(44,44,44,0) 100%),#2c2c2c;box-shadow:0 0 0 1px rgba(16,16,16,.55), 0 8px 20px rgba(0,0,0,.4);"></div>
<div style="left:614.5px;top:440px;width:350px;height:131px;background:linear-gradient(180deg,rgba(44,44,44,0),rgba(44,44,44,.78))"></div>
<div style="left:614.5px;top:571px;width:350px;height:144px;background:#2c2c2c;border-radius:0 0 10px 10px;"></div>
<div style="left:614.5px;top:570px;width:350px;height:1px;background:#424242;"></div>
<div style="left:614.5px;top:664.5px;width:350px;height:1px;background:#424242;"></div>
<span class="t" id="t54" style="left:716.4px;top:224.0px;font-size:19.9px;color:#fff;transform:scaleX(0.9964);">Ícones muito grandes</span>
<span class="t" id="t55" style="left:716.4px;top:268.0px;font-size:19.9px;color:#fff;transform:scaleX(0.9712);">Ícones grandes</span>
<span class="t" id="t56" style="left:716.4px;top:313.0px;font-size:19.9px;color:#fff;transform:scaleX(0.9809);">Ícones médios</span>
<span class="t" id="t57" style="left:716.4px;top:358.0px;font-size:19.9px;color:#fff;transform:scaleX(0.9794);">Ícones pequenos</span>
<span class="t" id="t58" style="left:716.4px;top:403.0px;font-size:19.9px;color:#fff;transform:scaleX(0.9163);">Lista</span>
<span class="t" id="t59" style="left:716.4px;top:448.0px;font-size:19.9px;color:#fff;transform:scaleX(0.9641);">Detalhes</span>
<span class="t" id="t60" style="left:716.4px;top:492.0px;font-size:19.9px;color:#fff;transform:scaleX(0.9724);">Mosaicos</span>
<span class="t" id="t61" style="left:716.4px;top:537.0px;font-size:19.9px;color:#fff;transform:scaleX(1.0062);">Conteúdo</span>
<span class="t" id="t62" style="left:716.4px;top:587.0px;font-size:19.9px;color:#fff;transform:scaleX(0.9708);">Painel de detalhes</span>
<span class="t" id="t63" style="left:716.4px;top:631.0px;font-size:19.9px;color:#fff;transform:scaleX(0.9724);">Painel de pré-visualização</span>
<span class="t" id="t64" style="left:716.4px;top:681.0px;font-size:19.9px;color:#fff;transform:scaleX(1.0033);">Mostre</span>
<div style="left:641.5px;top:497px;width:6px;height:6px;background:#e8e8e8;border-radius:3px;"></div>
<div style="left:641.5px;top:591.5px;width:6px;height:6px;background:#e8e8e8;border-radius:3px;"></div>
<div style="left:961px;top:668px;width:392px;height:239px;border-radius:10px;background:#2c2c2c;box-shadow:0 0 0 1px rgba(16,16,16,.55), 0 8px 20px rgba(0,0,0,.4);"></div>
<div style="left:961px;top:718.5px;width:392px;height:1px;background:#3f3f3f;"></div>
<div style="left:961px;top:769px;width:392px;height:1px;background:#3f3f3f;"></div>
<div style="left:966px;top:860px;width:383px;height:39px;background:#363636;border-radius:5px;"></div>
<span class="t" id="t65" style="left:1063.3px;top:686.0px;font-size:19.9px;color:#fff;transform:scaleX(0.9629);">Painel de navegação</span>
<span class="t" id="t66" style="left:1063.3px;top:735.0px;font-size:19.9px;color:#fff;transform:scaleX(0.9821);">Vista compacta</span>
<span class="t" id="t67" style="left:1063.3px;top:786.0px;font-size:19.9px;color:#fff;transform:scaleX(0.9695);">Caixas de verificação de itens</span>
<span class="t" id="t68" style="left:1063.3px;top:874.0px;font-size:19.9px;color:#fff;transform:scaleX(0.9886);">Itens ocultos</span>
<svg style="left:0;top:0;" width="2048" height="1341" viewBox="0 0 2048 1341"><rect x="678.1" y="222.4" width="18.4" height="14.6" rx="3" stroke="#e2e2e2" stroke-width="1.7" fill="none"/><path d="M680.5 240.6H694.5" stroke="#e2e2e2" stroke-width="1.7" stroke-linecap="round"/><rect x="679.7" y="268.7" width="15.2" height="11.4" rx="2" stroke="#e2e2e2" stroke-width="1.7" fill="none"/><path d="M678 284H696.8" stroke="#e2e2e2" stroke-width="1.7" stroke-linecap="round"/><rect x="681.2" y="313.7" width="12.3" height="9.3" rx="2" stroke="#e2e2e2" stroke-width="1.7" fill="none"/><path d="M682 326.3H692.8" stroke="#e2e2e2" stroke-width="1.7" stroke-linecap="round"/><path d="M682 329.4H692.8" stroke="#e2e2e2" stroke-width="1.7" stroke-linecap="round"/><rect x="678.1" y="356.7" width="6.9" height="6.7" rx="2" stroke="#e2e2e2" stroke-width="1.7" fill="none"/><rect x="678.1" y="368" width="6.9" height="6.7" rx="2" stroke="#e2e2e2" stroke-width="1.7" fill="none"/><rect x="689.6" y="356.7" width="6.9" height="6.7" rx="2" stroke="#e2e2e2" stroke-width="1.7" fill="none"/><rect x="689.6" y="368" width="6.9" height="6.7" rx="2" stroke="#e2e2e2" stroke-width="1.7" fill="none"/><path d="M676.7 403.4H685" stroke="#e2e2e2" stroke-width="1.6" stroke-linecap="round"/><path d="M689.5 403.4H698.3" stroke="#e2e2e2" stroke-width="1.6" stroke-linecap="round"/><path d="M676.7 407.87H685" stroke="#e2e2e2" stroke-width="1.6" stroke-linecap="round"/><path d="M689.5 407.87H698.3" stroke="#e2e2e2" stroke-width="1.6" stroke-linecap="round"/><path d="M676.7 412.34H685" stroke="#e2e2e2" stroke-width="1.6" stroke-linecap="round"/><path d="M689.5 412.34H698.3" stroke="#e2e2e2" stroke-width="1.6" stroke-linecap="round"/><path d="M676.7 416.81H685" stroke="#e2e2e2" stroke-width="1.6" stroke-linecap="round"/><path d="M689.5 416.81H698.3" stroke="#e2e2e2" stroke-width="1.6" stroke-linecap="round"/><path d="M676.7 448.7H698.3" stroke="#e2e2e2" stroke-width="1.6" stroke-linecap="round"/><path d="M676.7 453.09999999999997H698.3" stroke="#e2e2e2" stroke-width="1.6" stroke-linecap="round"/><path d="M676.7 457.5H698.3" stroke="#e2e2e2" stroke-width="1.6" stroke-linecap="round"/><path d="M676.7 461.9H698.3" stroke="#e2e2e2" stroke-width="1.6" stroke-linecap="round"/><rect x="676.5" y="492.6" width="7.6" height="5.6" rx="1.8" stroke="#e2e2e2" stroke-width="1.7" fill="none"/><rect x="676.5" y="502.2" width="7.6" height="5.8" rx="1.8" stroke="#e2e2e2" stroke-width="1.7" fill="none"/><path d="M688.8 493.7H698.3" stroke="#e2e2e2" stroke-width="1.6" stroke-linecap="round"/><path d="M688.8 503.8H698.3" stroke="#e2e2e2" stroke-width="1.6" stroke-linecap="round"/><rect x="677.8" y="535.6" width="6.2" height="4.2" rx="1.5" stroke="#e2e2e2" stroke-width="1.6" fill="none"/><path d="M688.8 537.2H697.2" stroke="#e2e2e2" stroke-width="1.6" stroke-linecap="round"/><rect x="677.8" y="542.6" width="6.2" height="4.2" rx="1.5" stroke="#e2e2e2" stroke-width="1.6" fill="none"/><path d="M688.8 544.2H697.2" stroke="#e2e2e2" stroke-width="1.6" stroke-linecap="round"/><rect x="677.8" y="549.8" width="6.2" height="4.2" rx="1.5" stroke="#e2e2e2" stroke-width="1.6" fill="none"/><path d="M688.8 551.4H697.2" stroke="#e2e2e2" stroke-width="1.6" stroke-linecap="round"/><path d="M689.4 586.2H694.5a4 4 0 0 1 4 4V598.2a4 4 0 0 1-4 4H689.4z" stroke="#86c6f0" stroke-width="1.700" fill="#0f4a72"/><path d="M689.4 586.2H680.7a4 4 0 0 0-4 4V598.2a4 4 0 0 0 4 4H689.4" stroke="#e6e6e6" stroke-width="1.700" fill="none"/><path d="M692.9 590.6h2.6000000000000227" stroke="#86c6f0" stroke-width="1.300"/><path d="M692.9 594.2h2.6000000000000227" stroke="#86c6f0" stroke-width="1.300"/><path d="M692.9 597.8000000000001h2.6000000000000227" stroke="#86c6f0" stroke-width="1.300"/><path d="M689.4 630.9H694.5a4 4 0 0 1 4 4V642.9a4 4 0 0 1-4 4H689.4z" stroke="#86c6f0" stroke-width="1.700" fill="none"/><path d="M689.4 630.9H680.7a4 4 0 0 0-4 4V642.9a4 4 0 0 0 4 4H689.4" stroke="#e6e6e6" stroke-width="1.700" fill="none"/><path d="M932.4 683.4l6 5.6-6 5.6" stroke="#d8d8d8" stroke-width="1.6" fill="none" stroke-linecap="round" stroke-linejoin="round"/><path d="M984.6 693.4l4.400 4.200 9-9" stroke="#d4d4d4" stroke-width="1.600" fill="none" stroke-linecap="round" stroke-linejoin="round"/><path d="M984.6 743.0l4.400 4.200 9-9" stroke="#d4d4d4" stroke-width="1.600" fill="none" stroke-linecap="round" stroke-linejoin="round"/><rect x="1023.3" y="685.8" width="21.8" height="15" rx="4" stroke="#e6e6e6" stroke-width="1.700" fill="none"/><path d="M1031.3 685.8H1027.3a4 4 0 0 0-4 4V696.8a4 4 0 0 0 4 4H1031.3z" stroke="#5aaee4" stroke-width="1.700" fill="none"/><path d="M1027.300 731.500v8.500M1023.300 736.500l4 4 4-4M1027.300 756v-8.500M1023.300 751l4-4 4 4" stroke="#4cace8" stroke-width="1.600" fill="none" stroke-linecap="round" stroke-linejoin="round"/><path d="M1036.3 737.0H1045.8" stroke="#e2e2e2" stroke-width="1.6" stroke-linecap="round"/><path d="M1036.3 741.05H1045.8" stroke="#e2e2e2" stroke-width="1.6" stroke-linecap="round"/><path d="M1036.3 745.1H1045.8" stroke="#e2e2e2" stroke-width="1.6" stroke-linecap="round"/><path d="M1036.3 749.15H1045.8" stroke="#e2e2e2" stroke-width="1.6" stroke-linecap="round"/><path d="M1023.300 797v-12a1.500 1.500 0 0 1 1.500-1.500h6l2 2.500h9.500a2.500 2.500 0 0 1 2.500 2.500v8.500" stroke="#e2e2e2" stroke-width="1.500" fill="none"/><path d="M1023.300 788.300h9.500" stroke="#e2e2e2" stroke-width="1.400"/><rect x="1033" y="791" width="12" height="6" rx="2" fill="#3a9ad8"/></svg>
<div style="left:911px;top:794px;width:448px;height:65px;border-radius:5px;background:#2b2b2b;box-shadow:0 0 0 1px #1f1f1f, 0 4px 10px rgba(0,0,0,.4);"></div>
<span class="t" id="t69" style="left:923.4px;top:807.0px;font-size:17.0px;color:#f4f4f4;transform:scaleX(1.0006);">Mostrar ou ocultar os ficheiros e pastas marcados como</span>
<span class="t" id="t70" style="left:923.4px;top:829.0px;font-size:17.0px;color:#f4f4f4;transform:scaleX(1.0086);">ocultos.</span>
<div style="left:0;top:0;width:2044px;height:1337px;border:2px solid #343434;border-top-color:#404040;border-right-color:#2c2c2c;border-radius:11px;pointer-events:none"></div>
<svg style="left:0;top:0;" width="2048" height="1341" viewBox="0 0 2048 1341"><path d="M984.6 881.8l4.400 4.200 9-9" stroke="#d4d4d4" stroke-width="1.600" fill="none" stroke-linecap="round" stroke-linejoin="round"/><path d="M1023.800 883.500a10.600 10.600 0 0 1 20.800 0" stroke="#d8d8d8" stroke-width="1.600" fill="none" stroke-linecap="round"/><circle cx="1034.200" cy="884.600" r="4.300" stroke="#d8d8d8" stroke-width="1.600" fill="none"/></svg>
</div></body></html>
